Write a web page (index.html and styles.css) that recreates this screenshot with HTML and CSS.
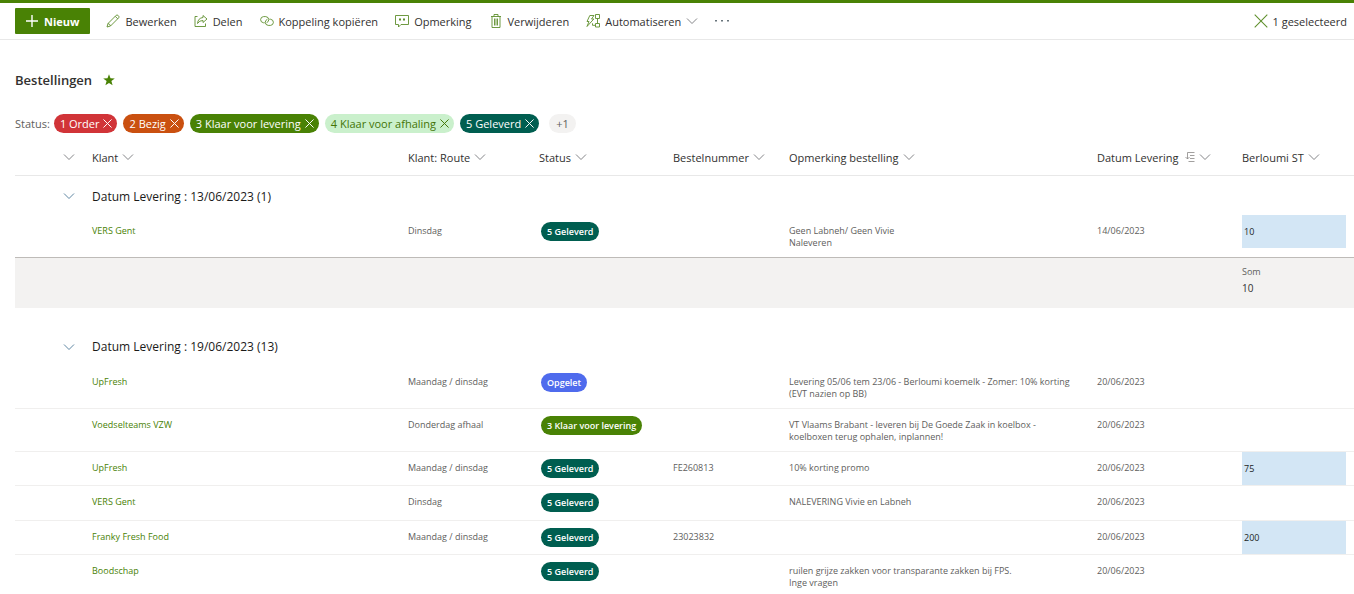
FILE: index.html
```html
<!DOCTYPE html>
<html lang="nl">
<head>
<meta charset="utf-8">
<title>Bestellingen</title>
<link rel="stylesheet" href="styles.css">
</head>
<body>
<svg class="sprite" aria-hidden="true">
  <symbol id="chevron" viewBox="0 0 12 12"><path d="M1 3.5 6 8.5 11 3.5"/></symbol>
  <symbol id="cross" viewBox="0 0 12 12"><path d="M.6 .6 11.4 11.4M11.4 .6 .6 11.4"/></symbol>
</svg>

<header class="toolbar">
  <button class="new" type="button"><svg class="icon-plus" viewBox="0 0 12 12"><path d="M6 0V12M0 6H12"/></svg>Nieuw</button>
  <nav class="commands" aria-label="Opdrachten">
    <button class="command" type="button"><svg class="icon" viewBox="0 0 14 14"><path d="M1 13 2 9.5 10.2 1.3Q11 .6 11.9 1.3L12.7 2.1Q13.4 3 12.7 3.8L4.5 12ZM2 9.5Q3.8 9.8 4.5 12M9.2 2.3 11.7 4.8"/></svg>Bewerken</button>
    <button class="command" type="button"><svg class="icon" viewBox="0 0 14 14"><path d="M3.5 2.5H1V12.5H11.5V9.5M9 1.5 13 5 9 8.5V6.5Q5.5 6.3 3.5 9.5 4 4 9 3.5Z"/></svg>Delen</button>
    <button class="command" type="button"><svg class="icon" viewBox="0 0 14 14"><path d="M4.6 8.8H3.5Q.6 8.3.6 5.6.8 2.8 3.5 2.6H5.8Q8.7 3 8.8 5.6 8.6 8 6.6 8.7M9.4 5.2H10.5Q13.4 5.7 13.4 8.4 13.2 11.2 10.5 11.4H8.2Q5.3 11 5.2 8.4 5.4 6 7.4 5.3"/></svg>Koppeling kopiëren</button>
    <button class="command" type="button"><svg class="icon" viewBox="0 0 14 14"><path d="M.5 1.5H13.5V10.5H6L3.5 13V10.5H.5Z"/><path class="icon-dots" d="M4 4.5H6V6.5H4ZM8 4.5H10V6.5H8Z"/></svg>Opmerking</button>
    <button class="command" type="button"><svg class="icon" viewBox="0 0 14 14"><path d="M2 2.5H12M5 2.5V.5H9V2.5M3 2.5V13.5H11V2.5M5.5 4.5V11.5M7 4.5V11.5M8.5 4.5V11.5"/></svg>Verwijderen</button>
    <button class="command" type="button"><svg class="icon" viewBox="0 0 14 14"><path d="M3.8 1.5H8L5.5 5H7.8L1 12.5 3 7.5H1ZM9.5.5H13.5V4.5H9.5ZM9.5 9.5H13.5V13H9.5ZM11.5 4.5V9.5M9.5 11.3H6.5V9.3"/></svg>Automatiseren<svg class="chevron"><use href="#chevron"/></svg></button>
    <button class="command" type="button" aria-label="Meer"><svg class="icon icon-more" viewBox="0 0 14 14"><path d="M0 6H2V7.5H0ZM6 6H8V7.5H6ZM12 6H14V7.5H12Z"/></svg></button>
  </nav>
  <button class="command selection" type="button"><svg class="icon"><use href="#cross"/></svg>1 geselecteerd</button>
</header>

<main class="content">
  <h1 class="title">Bestellingen <svg class="star" viewBox="0 0 12 12"><path d="M6 .3 7.5 4.3 11.8 4.5 8.4 7.1 9.6 11.3 6 8.9 2.4 11.3 3.6 7.1.2 4.5 4.5 4.3Z"/></svg></h1>

  <div class="filters">
    <span class="filters-label">Status:</span>
    <div class="chips">
      <button class="chip red" type="button">1 Order<svg class="chip-cross"><use href="#cross"/></svg></button>
      <button class="chip orange" type="button">2 Bezig<svg class="chip-cross"><use href="#cross"/></svg></button>
      <button class="chip green" type="button">3 Klaar voor levering<svg class="chip-cross"><use href="#cross"/></svg></button>
      <button class="chip mint" type="button">4 Klaar voor afhaling<svg class="chip-cross"><use href="#cross"/></svg></button>
      <button class="chip teal" type="button">5 Geleverd<svg class="chip-cross"><use href="#cross"/></svg></button>
      <button class="chip more" type="button">+1</button>
    </div>
  </div>

  <table class="orders">
    <colgroup>
      <col class="col-toggle"><col class="col-customer"><col class="col-route"><col class="col-status"><col class="col-number"><col class="col-remark"><col class="col-date"><col class="col-amount">
    </colgroup>
    <thead>
      <tr>
        <th class="toggle"><button class="sort" type="button" aria-label="Alles samenvouwen"><svg class="chevron"><use href="#chevron"/></svg></button></th>
        <th><button class="sort" type="button">Klant<svg class="chevron"><use href="#chevron"/></svg></button></th>
        <th><button class="sort" type="button">Klant: Route<svg class="chevron"><use href="#chevron"/></svg></button></th>
        <th><button class="sort" type="button">Status<svg class="chevron"><use href="#chevron"/></svg></button></th>
        <th><button class="sort" type="button">Bestelnummer<svg class="chevron"><use href="#chevron"/></svg></button></th>
        <th><button class="sort" type="button">Opmerking bestelling<svg class="chevron"><use href="#chevron"/></svg></button></th>
        <th><button class="sort" type="button">Datum Levering<svg class="grouped" viewBox="0 0 10 10"><path d="M2.5.5H9.5M2.5.5V7M.5 5 2.5 7 4.5 5M5 3.5H9.5M5 6.5H9.5M3.5 9.5H9.5"/></svg><svg class="chevron"><use href="#chevron"/></svg></button></th>
        <th><button class="sort" type="button">Berloumi ST<svg class="chevron"><use href="#chevron"/></svg></button></th>
      </tr>
    </thead>
    <tbody>
      <tr class="lead"><td colspan="8"></td></tr>
      <tr class="group">
        <td class="toggle"><button class="sort" type="button" aria-label="Groep samenvouwen"><svg class="chevron"><use href="#chevron"/></svg></button></td>
        <th colspan="7">Datum Levering : 13/06/2023 (1)</th>
      </tr>
      <tr class="order last">
        <td></td><td><a href="#">VERS Gent</a></td><td>Dinsdag</td><td class="status"><span class="pill teal">5 Geleverd</span></td><td></td><td>Geen Labneh/ Geen Vivie<br>Naleveren</td><td>14/06/2023</td><td class="amount"><div class="quantity">10</div></td>
      </tr>
      <tr class="total">
        <td colspan="7"></td><td><div class="total-label">Som</div><div class="total-value">10</div></td>
      </tr>
    </tbody>
    <tbody>
      <tr class="spacer"><td colspan="8"></td></tr>
      <tr class="group">
        <td class="toggle"><button class="sort" type="button" aria-label="Groep samenvouwen"><svg class="chevron"><use href="#chevron"/></svg></button></td>
        <th colspan="7">Datum Levering : 19/06/2023 (13)</th>
      </tr>
      <tr class="order">
        <td></td><td><a href="#">UpFresh</a></td><td>Maandag / dinsdag</td><td class="status"><span class="pill blue">Opgelet</span></td><td></td><td>Levering 05/06 tem 23/06 - Berloumi koemelk - Zomer: 10% korting (EVT nazien op BB)</td><td>20/06/2023</td><td></td>
      </tr>
      <tr class="order">
        <td></td><td><a href="#">Voedselteams VZW</a></td><td>Donderdag afhaal</td><td class="status"><span class="pill green">3 Klaar voor levering</span></td><td></td><td>VT Vlaams Brabant - leveren bij De Goede Zaak in koelbox - koelboxen terug ophalen, inplannen!</td><td>20/06/2023</td><td></td>
      </tr>
      <tr class="order">
        <td></td><td><a href="#">UpFresh</a></td><td>Maandag / dinsdag</td><td class="status"><span class="pill teal">5 Geleverd</span></td><td>FE260813</td><td>10% korting promo</td><td>20/06/2023</td><td class="amount"><div class="quantity">75</div></td>
      </tr>
      <tr class="order plain">
        <td></td><td><a href="#">VERS Gent</a></td><td>Dinsdag</td><td class="status"><span class="pill teal">5 Geleverd</span></td><td></td><td>NALEVERING Vivie en Labneh</td><td>20/06/2023</td><td></td>
      </tr>
      <tr class="order">
        <td></td><td><a href="#">Franky Fresh Food</a></td><td>Maandag / dinsdag</td><td class="status"><span class="pill teal">5 Geleverd</span></td><td>23023832</td><td></td><td>20/06/2023</td><td class="amount"><div class="quantity">200</div></td>
      </tr>
      <tr class="order last">
        <td></td><td><a href="#">Boodschap</a></td><td></td><td class="status"><span class="pill teal">5 Geleverd</span></td><td></td><td>ruilen grijze zakken voor transparante zakken bij FPS.<br>Inge vragen</td><td>20/06/2023</td><td></td>
      </tr>
    </tbody>
  </table>
</main>
</body>
</html>
```
FILE: styles.css
```css
* { box-sizing: border-box; }

body {
  margin: 0;
  border-top: 3px solid #498205;
  background: #fff;
  color: #323130;
  font-family: "Segoe UI", "Open Sans", "Noto Sans", sans-serif;
  font-size: 11px;
  overflow: hidden;
}

button {
  margin: 0;
  padding: 0;
  border: 0;
  background: none;
  color: inherit;
  font: inherit;
  white-space: nowrap;
}

svg { flex: none; fill: none; stroke: currentColor; }
.sprite { display: none; }

.toolbar {
  display: flex;
  align-items: center;
  height: 37px;
  padding: 0 7px 0 15px;
  border-bottom: 1px solid #e8e8e8;
}

.new {
  display: flex;
  align-items: center;
  gap: 6px;
  height: 26px;
  padding: 0 11px;
  border-radius: 1px;
  background: #498205;
  color: #fff;
  font-weight: 700;
}
.icon-plus { width: 12px; height: 12px; stroke-width: 1.4; }

.commands { display: flex; gap: 17px; margin-left: 16px; }
.command { display: flex; align-items: center; gap: 5px; }
.icon { width: 14px; height: 14px; color: #5f8f2c; stroke-width: 0.9; }
.icon-dots { fill: currentColor; stroke: none; }
.icon-more { color: #69757c; fill: currentColor; stroke: none; }
.selection { margin-left: auto; }

.chevron { width: 12px; height: 12px; color: #76777a; stroke-width: 0.9; }

.content { padding-left: 15px; }

.title {
  display: flex;
  align-items: center;
  gap: 11px;
  margin: 30px 0 23px;
  font-size: 13px;
  font-weight: 600;
  line-height: 20px;
}
.star { width: 12px; height: 12px; color: #498205; fill: currentColor; stroke: none; }

.filters { display: flex; align-items: center; gap: 4px; height: 20px; }
.filters-label { color: #605e5c; }
.chips { display: flex; gap: 6px; }
.chip {
  display: flex;
  align-items: center;
  gap: 4px;
  height: 19px;
  padding: 0 5px 0 6px;
  border-radius: 10px;
  color: #fff;
  font-weight: 500;
}
.chip-cross { width: 9px; height: 9px; stroke-width: 1.3; }
.more { margin-left: 4px; padding: 0 7px; background: #f3f2f1; color: #605e5c; }

.red { background: #d13438; }
.orange { background: #ca5010; }
.green { background: #498205; }
.mint { background: #caf0cc; color: #437406; }
.teal { background: #005e50; }
.blue { background: #4f6bed; }

.orders { width: 100%; margin-top: 7px; border-collapse: collapse; table-layout: fixed; }
.col-toggle { width: 77px; }
.col-customer { width: 316px; }
.col-route { width: 131px; }
.col-status { width: 134px; }
.col-number { width: 116px; }
.col-date { width: 145px; }
.col-amount { width: 112px; }

.orders th, .orders td { padding: 0; text-align: left; }
.orders thead th { height: 35px; border-bottom: 1px solid #e8e8e8; font-weight: 500; }
.sort { display: flex; align-items: center; gap: 4px; }
.grouped { width: 10px; height: 10px; margin-left: 3px; color: #8a8886; stroke-width: 0.8; }
.toggle .sort { margin-left: 48px; }

.lead { height: 2px; }
.group th, .group td { height: 38px; }
.orders .group th { color: #1b1a19; font-size: 12px; font-weight: 500; }
.group .chevron { color: #4c7897; }

.order { height: 34px; border-bottom: 1px solid #f0efee; }
.plain { height: 35px; }
.last { border-bottom: 0; }
.orders .order td {
  padding: 10px 16px 8px 0;
  color: #605e5c;
  font-size: 9px;
  line-height: 12px;
  vertical-align: top;
}
.order a { color: #498205; text-decoration: none; }
.orders .order .status { padding: 7px 0 0 2px; }
.pill {
  display: inline-block;
  height: 19px;
  padding: 0 6px;
  border-radius: 10px;
  color: #fff;
  font-weight: 600;
  line-height: 19px;
  white-space: nowrap;
}
.orders .order .amount { padding: 0 8px 0 0; }
.quantity { height: 33px; padding-left: 2px; background: #d3e6f5; color: #201f1e; line-height: 33px; }

.total { height: 50px; border-top: 1px solid #bebbb8; background: #f3f2f1; }
.total td { vertical-align: top; }
.total .total-label { padding-top: 8px; color: #605e5c; font-size: 9px; line-height: 12px; }
.total-value { font-size: 10px; line-height: 20px; }
.spacer { height: 20px; }
```
